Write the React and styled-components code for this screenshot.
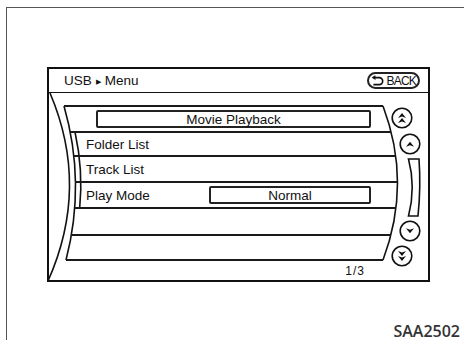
import React from "react";
import styled, { createGlobalStyle } from "styled-components";

const GlobalStyle = createGlobalStyle`
  html, body {
    margin: 0;
    padding: 0;
    background: #fff;
  }
  body {
    font-family: "Liberation Sans", Arial, sans-serif;
    color: #111;
  }
`;

const Page = styled.div`
  width: 464px;
  height: 340px;
  overflow: hidden;
  background: #fff;
`;

const Frame = styled.div`
  margin: 7px 0 0 6px;
  height: 333px;
  box-sizing: border-box;
  border-top: 1px solid #555;
  border-left: 1px solid #555;
  display: flex;
  flex-direction: column;
`;

const Screen = styled.div`
  margin: 59px 0 0 40px;
  width: 383px;
  height: 215px;
  box-sizing: border-box;
  border: 2px solid #111;
  display: flex;
  flex-direction: column;
`;

const Header = styled.div`
  height: 24px;
  box-sizing: border-box;
  border-bottom: 1px solid #111;
  display: flex;
  align-items: center;
  justify-content: space-between;
  padding: 0 8px 0 15px;
`;

const Title = styled.div`
  font-size: 13.5px;
  display: flex;
  align-items: center;
  gap: 4px;
`;

const Crumb = styled.span`
  font-size: 7px;
  position: relative;
  top: 1px;
`;

const BackButton = styled.div`
  width: 53px;
  height: 17px;
  box-sizing: border-box;
  border: 2px solid #222;
  border-radius: 9px;
  display: flex;
  align-items: center;
  gap: 2px;
  padding: 0 2px;
  font-size: 12px;
  letter-spacing: -0.8px;
  line-height: 1;
`;

const Body = styled.div`
  position: relative;
  flex: 1;
  display: flex;
  align-items: flex-start;
`;

const Bezel = styled.svg`
  position: absolute;
  left: 0;
  top: 0;
  overflow: visible;
  pointer-events: none;
`;

const Panel = styled.div`
  margin: 13px 0 0 15px;
  width: 327px;
  display: flex;
  flex-direction: column;
`;

const Row = styled.div`
  position: relative;
  height: ${p => p.$h}px;
  display: flex;
  align-items: center;
  padding-left: ${p => p.$pad}px;
  font-size: 13.5px;

  &::before {
    content: "";
    position: absolute;
    top: -1px;
    height: 2px;
    left: ${p => p.$l}px;
    right: ${p => p.$r}px;
    background: #1a1a1a;
  }
`;

const Label = styled.span`
  width: ${p => p.$w || "auto"};
`;

const ValueBox = styled.div`
  width: ${p => p.$w}px;
  height: 18px;
  box-sizing: border-box;
  border: 2px solid #222;
  border-radius: 2px;
  display: flex;
  align-items: center;
  justify-content: center;
  font-size: 13.5px;
`;

const Rule = styled.div`
  height: 2px;
  margin: -1px ${p => p.$r}px 0 ${p => p.$l}px;
  background: #1a1a1a;
`;

const PageCount = styled.div`
  margin-top: 3px;
  padding-right: 26px;
  text-align: right;
  font-size: 12px;
  line-height: 14px;
  letter-spacing: 1px;
`;

const ScrollCol = styled.div`
  margin-top: 14px;
  width: 36px;
  display: flex;
  flex-direction: column;
`;

const ScrollItem = styled.svg`
  display: block;
  margin-left: ${p => p.$ml}px;
  margin-top: ${p => p.$mt}px;
`;

const Caption = styled.div`
  margin: auto 0 1px;
  align-self: flex-end;
  padding-right: 4px;
  font-family: "Open Sans", "Liberation Sans", sans-serif;
  font-weight: 600;
  font-size: 16px;
  line-height: 16px;
  color: #333;
`;

const HEAD = "M-4,2.5 L0,-2.5 L4,2.5 L0,1 Z";

const RoundButton = ({ double, down, ml, mt }) => (
  <ScrollItem width="22" height="22" viewBox="-11 -11 22 22" $ml={ml} $mt={mt}>
    <circle r="9.8" fill="none" stroke="#111" strokeWidth="1.6" />
    <g transform={down ? "rotate(180)" : undefined} fill="#111">
      {double ? (
        <>
          <path d={HEAD} transform="translate(0,-2.6)" />
          <path d={HEAD} transform="translate(0,2.4)" />
        </>
      ) : (
        <path d={HEAD} transform="translate(0,0.3)" />
      )}
    </g>
  </ScrollItem>
);

const BackIcon = () => (
  <svg width="14" height="12" viewBox="0 0 14 12">
    <path d="M4,2.5 H8.5 A3.6,3.6 0 0 1 8.5,9.7 H2.5" fill="none" stroke="#111" strokeWidth="1.7" />
    <path d="M0.6,2.5 L4.6,0 L4.6,5 Z" fill="#111" />
  </svg>
);

const rows = [
  { h: 26, l: 0, r: 8, pad: 32, box: "Movie Playback", boxW: 275 },
  { h: 24, l: 6, r: 0, pad: 22, label: "Folder List" },
  { h: 26, l: 10, r: -5, pad: 22, label: "Track List" },
  { h: 26, l: 11, r: -6, pad: 22, label: "Play Mode", box: "Normal", boxW: 162 },
  { h: 27, l: 11, r: -5, pad: 22 },
  { h: 25, l: 7, r: 0, pad: 22 }
];

export default function App() {
  return (
    <Page>
      <GlobalStyle />
      <Frame>
        <Screen>
          <Header>
            <Title>
              USB <Crumb>▶</Crumb> Menu
            </Title>
            <BackButton>
              <BackIcon />
              BACK
            </BackButton>
          </Header>
          <Body>
            <Bezel width="378" height="187" viewBox="49 93 378 187">
              <g fill="none" stroke="#111" strokeWidth="1.6">
                <path d="M50,93 Q90,187 48,281" />
                <path d="M64,106 Q86,183 66,260" />
                <path d="M75,132 Q83.4,170 79.7,208" />
                <path d="M383,106 Q412,183 383,260" />
              </g>
            </Bezel>
            <Panel>
              {rows.map((row, i) => (
                <Row key={i} $h={row.h} $l={row.l} $r={row.r} $pad={row.pad}>
                  {row.label && <Label $w={row.box ? "123px" : "auto"}>{row.label}</Label>}
                  {row.box && <ValueBox $w={row.boxW}>{row.box}</ValueBox>}
                </Row>
              ))}
              <Rule $l={2} $r={8} />
              <PageCount>1/3</PageCount>
            </Panel>
            <ScrollCol>
              <RoundButton double ml={0} mt={0} />
              <RoundButton ml={8} mt={4} />
              <ScrollItem width="16" height="60" viewBox="406 158 16 60" $ml={15} $mt={3}>
                <path
                  d="M408.5,159 L419,159 Q421,187 418,216 L408.5,216 Q416,187 408.5,159 Z"
                  fill="none"
                  stroke="#111"
                  strokeWidth="1.6"
                />
              </ScrollItem>
              <RoundButton down ml={8} mt={2} />
              <RoundButton double down ml={0} mt={3} />
            </ScrollCol>
          </Body>
        </Screen>
        <Caption>SAA2502</Caption>
      </Frame>
    </Page>
  );
}
